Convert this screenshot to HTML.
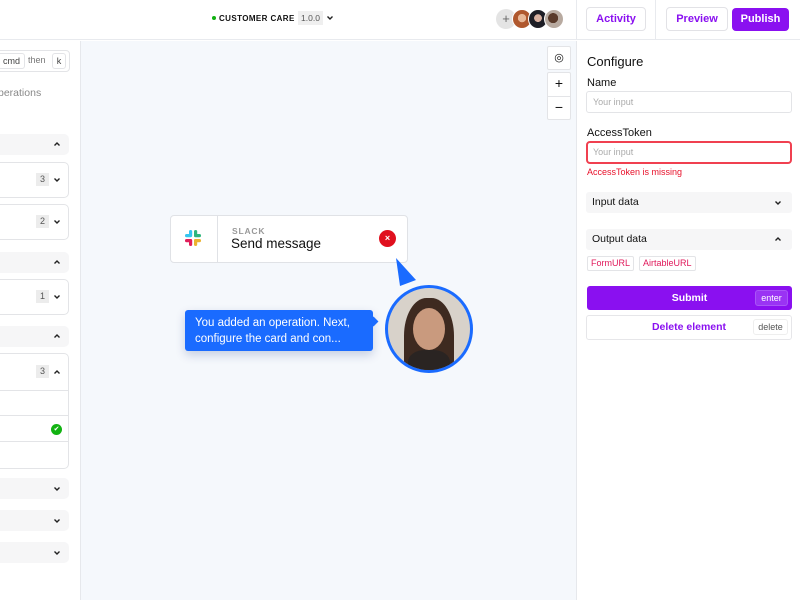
<!DOCTYPE html>
<html><head><meta charset="utf-8"><style>
*{box-sizing:border-box;margin:0;padding:0}
body{width:800px;height:600px;overflow:hidden;background:#fff;font-family:"Liberation Sans",sans-serif;position:relative;color:#111}
.a{position:absolute}
.hdr{left:0;top:0;width:800px;height:40px;background:#fff;border-bottom:1px solid #e8eaee}
.canvas{left:80px;top:41px;width:496px;height:559px;background:#f5f8fc;border-left:1px solid #e6e8ec}
.rp{left:576px;top:41px;width:224px;height:559px;background:#fff;border-left:1px solid #e6e8ec}
.sec{left:0;width:69px;height:21px;background:#f6f6f7;border-radius:0 5px 5px 0}
.card{left:-2px;width:71px;background:#fff;border:1px solid #e3e4e7;border-radius:0 5px 5px 0}
.badge{width:13px;height:13px;background:#ececec;font-size:9px;color:#555;text-align:center;line-height:13px}
.btn{border:1px solid #e2e2e6;border-radius:4px;color:#8a10f0;font-size:11px;font-weight:bold;text-align:center;line-height:22px}
.inp{left:586px;width:206px;height:22px;border:1px solid #e3e4e7;border-radius:3px;font-size:9px;color:#aaa;padding-left:6px;line-height:20px}
.lbl{left:587px;font-size:11px;color:#111}
.row{left:586px;width:206px;height:21px;background:#f6f6f7;border-radius:3px;font-size:10.5px;padding-left:6px;line-height:21px}
.tag{height:15px;border:1px solid #e3e4e7;border-radius:2px;font-size:9px;color:#e0185a;line-height:13px;padding:0 3px}
svg.d,svg.u{position:absolute;width:8px;height:6px}
</style></head><body>
<svg width="0" height="0" style="position:absolute"><defs>
<symbol id="dn" viewBox="0 0 8 6"><path d="M1.5 1.5 L4 4 L6.5 1.5" fill="none" stroke="#222" stroke-width="1.4"/></symbol>
<symbol id="up" viewBox="0 0 8 6"><path d="M1.5 4.5 L4 2 L6.5 4.5" fill="none" stroke="#222" stroke-width="1.4"/></symbol>
</defs></svg>
<div class="a hdr"></div>
<div class="a" style="left:212px;top:16px;width:4px;height:4px;border-radius:50%;background:#10b010"></div>
<div class="a" style="left:219px;top:14px;font-size:8px;font-weight:bold;letter-spacing:0.4px;white-space:nowrap">CUSTOMER CARE</div>
<div class="a" style="left:298px;top:11px;width:25px;height:14px;background:#efefef;font-size:8.5px;color:#555;text-align:center;line-height:14px">1.0.0</div>
<svg class="d" style="left:326px;top:15px"><use href="#dn"/></svg>
<div class="a" style="left:496px;top:9px;width:20px;height:20px;border-radius:50%;background:#e4e4e4;color:#666;text-align:center;line-height:20px;font-size:13px">+</div>
<div class="a" style="left:512px;top:9px;width:20px;height:20px;border-radius:50%;background:radial-gradient(circle at 50% 45%,#e8b898 0 30%,#b0582e 32%);border:1px solid #fff"></div>
<div class="a" style="left:528px;top:9px;width:20px;height:20px;border-radius:50%;background:radial-gradient(circle at 50% 45%,#d8b0a0 0 28%,#1e1e26 30%);border:1px solid #fff"></div>
<div class="a" style="left:544px;top:9px;width:20px;height:20px;border-radius:50%;background:radial-gradient(circle at 45% 45%,#5a3a2a 0 35%,#b8aaa0 37%);border:1px solid #fff"></div>
<div class="a" style="left:576px;top:0;width:1px;height:40px;background:#e8eaee"></div>
<div class="a" style="left:655px;top:0;width:1px;height:40px;background:#e8eaee"></div>
<div class="a btn" style="left:586px;top:7px;width:60px;height:24px">Activity</div>
<div class="a btn" style="left:666px;top:7px;width:62px;height:24px">Preview</div>
<div class="a btn" style="left:732px;top:8px;width:57px;height:23px;background:#8a10f0;color:#fff;border:none;line-height:23px">Publish</div>

<!-- left sidebar -->
<div class="a" style="left:-4px;top:50px;width:74px;height:22px;border:1px solid #e3e4e7;border-radius:4px"></div>
<div class="a" style="left:-2px;top:53px;width:27px;height:16px;border:1px solid #e3e4e7;border-radius:3px;font-size:9px;color:#444;text-align:center;line-height:14px">cmd</div>
<div class="a" style="left:28px;top:55px;font-size:9px;color:#777">then</div>
<div class="a" style="left:52px;top:53px;width:14px;height:16px;border:1px solid #e3e4e7;border-radius:3px;font-size:9px;color:#444;text-align:center;line-height:14px">k</div>
<div class="a" style="left:-2px;top:87px;font-size:10.5px;color:#888">perations</div>
<div class="a sec" style="top:134px"></div><svg class="u" style="left:53px;top:141px"><use href="#up"/></svg>
<div class="a card" style="top:162px;height:36px"></div><div class="a badge" style="left:36px;top:173px">3</div><svg class="d" style="left:53px;top:177px"><use href="#dn"/></svg>
<div class="a card" style="top:204px;height:36px"></div><div class="a badge" style="left:36px;top:215px">2</div><svg class="d" style="left:53px;top:219px"><use href="#dn"/></svg>
<div class="a sec" style="top:252px"></div><svg class="u" style="left:53px;top:259px"><use href="#up"/></svg>
<div class="a card" style="top:279px;height:36px"></div><div class="a badge" style="left:36px;top:290px">1</div><svg class="d" style="left:53px;top:294px"><use href="#dn"/></svg>
<div class="a sec" style="top:326px"></div><svg class="u" style="left:53px;top:333px"><use href="#up"/></svg>
<div class="a card" style="top:353px;height:116px"></div><div class="a badge" style="left:36px;top:365px">3</div><svg class="u" style="left:53px;top:369px"><use href="#up"/></svg>
<div class="a" style="left:0;top:390px;width:69px;height:1px;background:#e3e4e7"></div>
<div class="a" style="left:0;top:415px;width:69px;height:1px;background:#e3e4e7"></div>
<div class="a" style="left:0;top:441px;width:69px;height:1px;background:#e3e4e7"></div>
<div class="a" style="left:51px;top:424px;width:11px;height:11px;border-radius:50%;background:#12b312;color:#fff;font-size:7px;text-align:center;line-height:11px">✔</div>
<div class="a sec" style="top:478px"></div><svg class="d" style="left:53px;top:486px"><use href="#dn"/></svg>
<div class="a sec" style="top:510px"></div><svg class="d" style="left:53px;top:518px"><use href="#dn"/></svg>
<div class="a sec" style="top:542px"></div><svg class="d" style="left:53px;top:550px"><use href="#dn"/></svg>

<div class="a canvas"></div>
<div class="a" style="left:547px;top:46px;width:24px;height:24px;background:#fff;border:1px solid #e3e4e7;border-radius:2px;text-align:center;line-height:22px;font-size:11px">◎</div>
<div class="a" style="left:547px;top:72px;width:24px;height:48px;background:#fff;border:1px solid #e3e4e7;border-radius:2px"></div>
<div class="a" style="left:547px;top:96px;width:24px;height:1px;background:#e3e4e7"></div>
<div class="a" style="left:547px;top:75px;width:24px;text-align:center;font-size:14px">+</div>
<div class="a" style="left:547px;top:99px;width:24px;text-align:center;font-size:14px">−</div>

<div class="a" style="left:170px;top:215px;width:238px;height:48px;background:#fff;border:1px solid #e0e2e6;border-radius:4px"></div>
<div class="a" style="left:217px;top:216px;width:1px;height:46px;background:#e0e2e6"></div>
<svg class="a" style="left:184px;top:229px" width="18" height="18" viewBox="0 0 18 18">
<rect x="5" y="1" width="3.2" height="7" rx="1.6" fill="#36c5f0"/><rect x="1" y="5" width="7" height="3.2" rx="1.6" fill="#36c5f0"/>
<rect x="10" y="1" width="3.2" height="7" rx="1.6" fill="#2eb67d"/><rect x="10" y="5" width="7" height="3.2" rx="1.6" fill="#2eb67d"/>
<rect x="10" y="10" width="3.2" height="7" rx="1.6" fill="#ecb22e"/><rect x="10" y="10" width="7" height="3.2" rx="1.6" fill="#ecb22e"/>
<rect x="5" y="10" width="3.2" height="7" rx="1.6" fill="#e01e5a"/><rect x="1" y="10" width="7" height="3.2" rx="1.6" fill="#e01e5a"/></svg>
<div class="a" style="left:232px;top:226px;font-size:8.5px;font-weight:bold;color:#999;letter-spacing:0.8px">SLACK</div>
<div class="a" style="left:231px;top:236px;font-size:13.5px;color:#111">Send message</div>
<div class="a" style="left:379px;top:230px;width:17px;height:17px;border-radius:50%;background:#e0101e;color:#fff;font-size:9px;text-align:center;line-height:17px;font-weight:bold">×</div>
<svg class="a" style="left:390px;top:254px" width="30" height="36"><polygon points="6,4 26,26 10,32" fill="#1a6bff"/></svg>
<div class="a" style="left:185px;top:310px;width:188px;height:41px;background:#1a6bff;border-radius:3px;color:#fff;font-size:11.5px;line-height:16px;padding:5px 10px;box-shadow:0 4px 10px rgba(0,40,120,.2)">You added an operation. Next, configure the card and con...</div>
<div class="a" style="left:370px;top:318px;width:7px;height:7px;background:#1a6bff;transform:rotate(45deg)"></div>
<div class="a" style="left:385px;top:285px;width:88px;height:88px;border-radius:50%;border:3px solid #1a6bff;overflow:hidden;background:#d8d2ca">
<div class="a" style="left:16px;top:10px;width:50px;height:84px;border-radius:45% 45% 10% 10%;background:#3e2a20"></div>
<div class="a" style="left:25px;top:20px;width:32px;height:42px;border-radius:50%;background:#c99a7e"></div>
<div class="a" style="left:20px;top:62px;width:42px;height:30px;border-radius:40% 40% 0 0;background:#2a2422"></div>
</div>

<div class="a rp"></div>
<div class="a" style="left:587px;top:54px;font-size:13px">Configure</div>
<div class="a lbl" style="top:77px">Name</div>
<div class="a inp" style="top:91px">Your input</div>
<div class="a lbl" style="top:127px">AccessToken</div>
<div class="a inp" style="top:141px;height:23px;border:2px solid #f04050;border-radius:4px;padding-left:5px;line-height:19px">Your input</div>
<div class="a" style="left:587px;top:167px;font-size:9px;color:#e8102a">AccessToken is missing</div>
<div class="a row" style="top:192px">Input data<svg class="d" style="right:10px;top:8px"><use href="#dn"/></svg></div>
<div class="a row" style="top:229px">Output data<svg class="u" style="right:10px;top:7px"><use href="#up"/></svg></div>
<div class="a tag" style="left:587px;top:256px">FormURL</div>
<div class="a tag" style="left:639px;top:256px">AirtableURL</div>
<div class="a" style="left:587px;top:286px;width:205px;height:24px;background:#8a10f0;border-radius:3px;color:#fff;font-size:10.5px;text-align:center;line-height:24px;font-weight:bold">Submit</div>
<div class="a" style="left:755px;top:290px;width:33px;height:16px;border:1px solid #a855f7;border-radius:3px;background:#9a33f4;color:#fff;font-size:9px;text-align:center;line-height:14px">enter</div>
<div class="a" style="left:586px;top:315px;width:206px;height:25px;border:1px solid #e6e6e9;border-radius:3px;color:#8a10f0;font-size:10.5px;text-align:center;line-height:23px;font-weight:bold">Delete element</div>
<div class="a" style="left:753px;top:319px;width:35px;height:16px;border:1px solid #eee;border-radius:3px;color:#555;font-size:9px;text-align:center;line-height:14px">delete</div>
</body></html>
